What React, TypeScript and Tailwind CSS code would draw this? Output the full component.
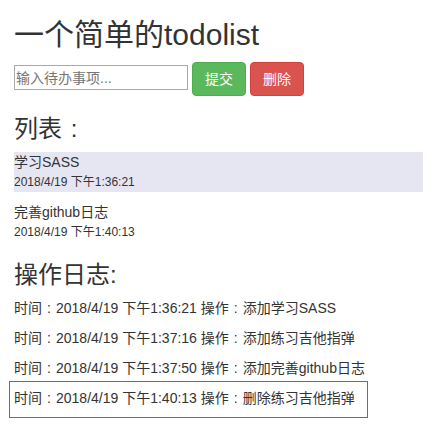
import React, { useState } from 'react';

type Todo = { id: number; text: string; time: string };
type Log = { id: number; time: string; action: string };

const FONT = "font-['Liberation_Sans','Noto_Sans_CJK_SC',sans-serif]";

// full-width colon, centred in its em box like the original page's font
const Colon = () => <span className="inline-block w-[1em] text-center">:</span>;

function App() {
  const [todos] = useState<Todo[]>([
    { id: 1, text: '学习SASS', time: '2018/4/19 下午1:36:21' },
    { id: 2, text: '完善github日志', time: '2018/4/19 下午1:40:13' },
  ]);
  const [logs] = useState<Log[]>([
    { id: 1, time: '2018/4/19 下午1:36:21', action: '添加学习SASS' },
    { id: 2, time: '2018/4/19 下午1:37:16', action: '添加练习吉他指弹' },
    { id: 3, time: '2018/4/19 下午1:37:50', action: '添加完善github日志' },
    { id: 4, time: '2018/4/19 下午1:40:13', action: '删除练习吉他指弹' },
  ]);
  const [value, setValue] = useState('');

  return (
    <div className={`min-h-screen bg-white text-[#333] ${FONT} pl-[14px] pr-[6px] pt-[18px]`}>
      <h1 className="text-[30px] leading-[33px] font-normal">一个简单的todolist</h1>

      <div className="mt-[11px] flex items-start gap-[4px]">
        <input
          type="text"
          value={value}
          onChange={(e) => setValue(e.target.value)}
          placeholder="输入待办事项..."
          className="mt-[3px] w-[174px] h-[25px] border border-[#a9a9a9] px-[1px] text-[14px] outline-none placeholder:text-[#757575]"
        />
        <button className="h-[34px] px-[12px] rounded-[4px] border border-[#4cae4c] bg-[#5cb85c] text-white text-[14px] leading-[20px]">
          提交
        </button>
        <button className="h-[34px] px-[12px] rounded-[4px] border border-[#d43f3a] bg-[#d9534f] text-white text-[14px] leading-[20px]">
          删除
        </button>
      </div>

      <h3 className="mt-[20px] text-[24px] leading-[26px] font-normal">
        列表<Colon />
      </h3>
      <ul className="mt-[10px] flex flex-col gap-[10px]">
        {todos.map((t, i) => (
          <li key={t.id} className={i === 0 ? 'bg-[#e6e6f2]' : ''}>
            <div className="text-[14px] leading-[20px]">{t.text}</div>
            <div className="text-[12px] leading-[20px]">{t.time}</div>
          </li>
        ))}
      </ul>

      <h3 className="mt-[20px] text-[24px] leading-[26px] font-normal">操作日志:</h3>
      <div className="mt-[10px] flex flex-col">
        {logs.map((l, i) =>
          i === logs.length - 1 ? (
            <p
              key={l.id}
              className="-ml-[5px] w-[359px] outline outline-offset-[-1px] outline-[#e8393b] pl-[5px] pt-[7px] pb-[10px] text-[14px] leading-[20px]"
            >
              时间<Colon />{l.time} 操作<Colon />{l.action}
            </p>
          ) : (
            <p
              key={l.id}
              className={`text-[14px] leading-[20px] ${i === logs.length - 2 ? 'mb-[3px]' : 'mb-[10px]'}`}
            >
              时间<Colon />{l.time} 操作<Colon />{l.action}
            </p>
          )
        )}
      </div>
    </div>
  );
}

export default App;
